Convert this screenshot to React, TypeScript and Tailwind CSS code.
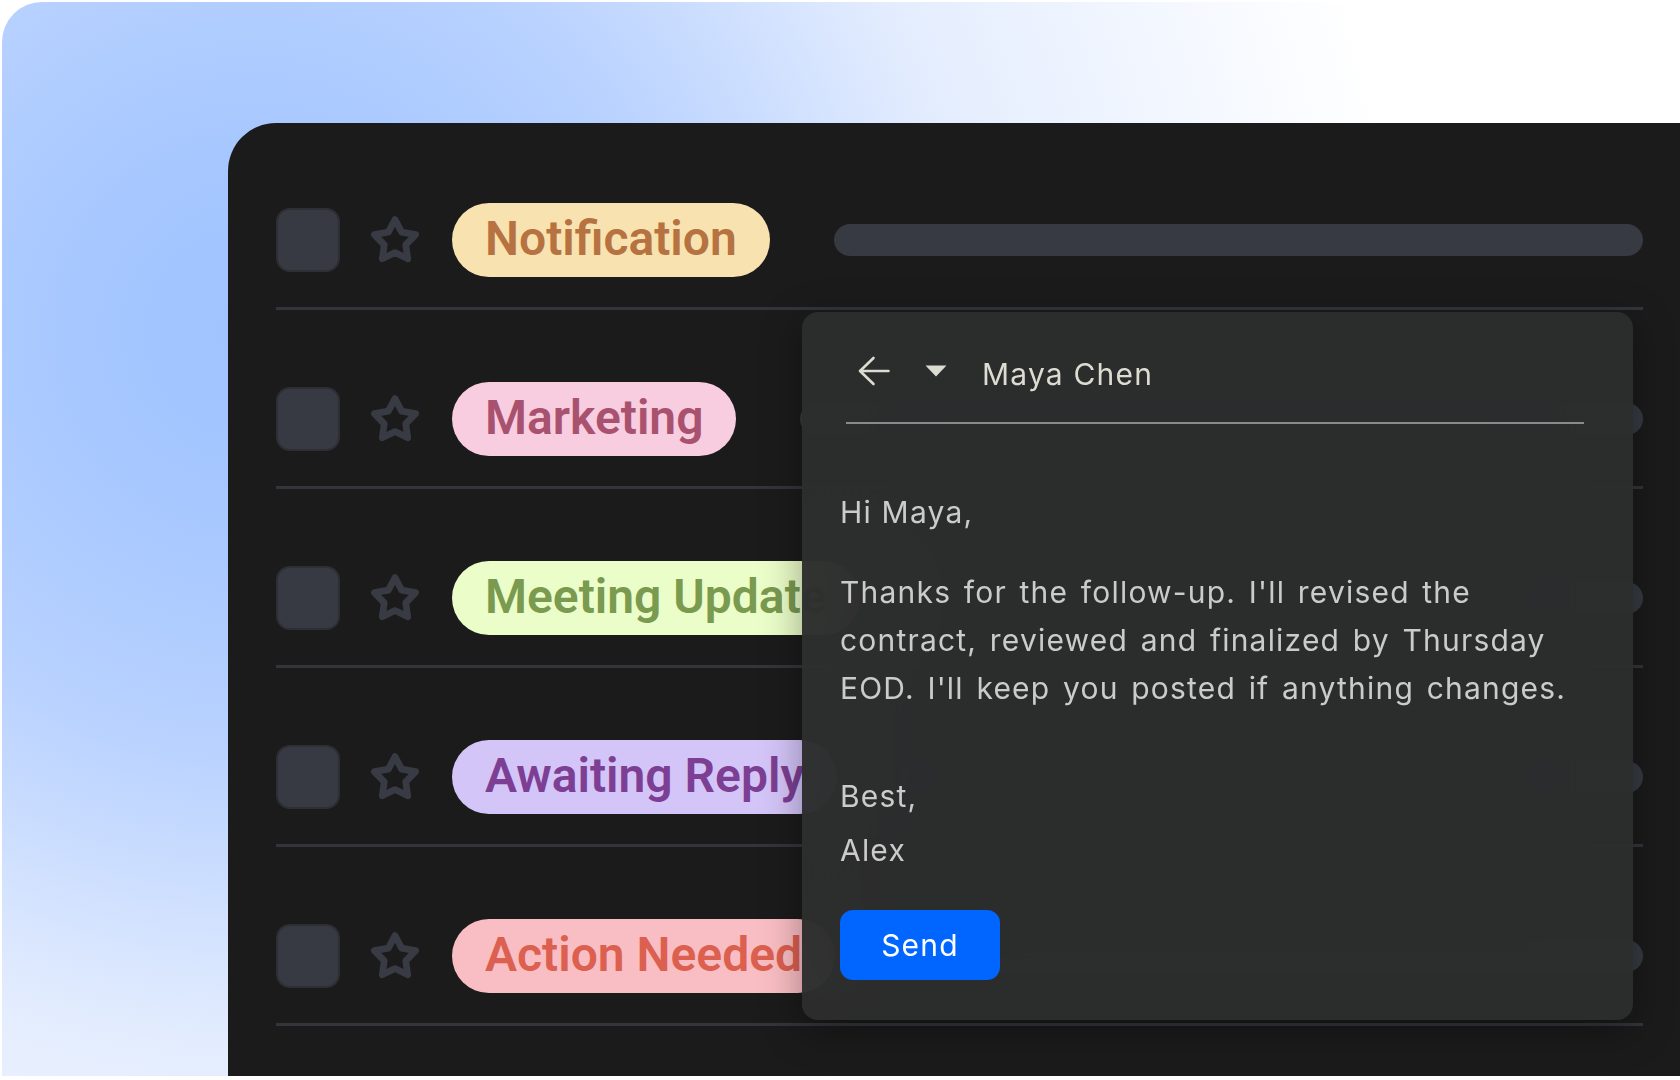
import React from "react";

function Star() {
  return (
    <svg width="52" height="52" viewBox="0 0 24 24" fill="none" className="shrink-0">
      <polygon
        points="12,2.6 15.06,8.39 21.51,9.51 16.95,14.21 17.88,20.69 12,17.8 6.12,20.69 7.05,14.21 2.49,9.51 8.94,8.39"
        stroke="#383b43"
        strokeWidth="3.1"
        strokeLinejoin="round"
      />
    </svg>
  );
}

type RowData = { label: string; bg: string; fg: string };

const rows: RowData[] = [
  { label: "Notification", bg: "bg-[#f7e2b0]", fg: "text-[#b67240]" },
  { label: "Marketing", bg: "bg-[#f9cde0]", fg: "text-[#a9526f]" },
  { label: "Meeting Update", bg: "bg-[#ebfdc9]", fg: "text-[#7a9a4f]" },
  { label: "Awaiting Reply", bg: "bg-[#d4c5f8]", fg: "text-[#7d3f93]" },
  { label: "Action Needed", bg: "bg-[#f9bec3]", fg: "text-[#dc604f]" },
];

function Row({ r }: { r: RowData }) {
  return (
    <div className="flex items-center pb-[30px] border-b-[3px] border-[#33353b]">
      <div className="w-[64px] h-[64px] shrink-0 rounded-[14px] bg-[#373a42] border-2 border-[#2e2f34]" />
      <div className="ml-[29px] mr-[31px] flex items-center">
        <Star />
      </div>
      <div
        className={`h-[74px] shrink-0 rounded-full px-[33px] pb-[3px] flex items-center ${r.bg} ${r.fg} font-['Roboto',sans-serif] text-[48px] font-semibold leading-none whitespace-nowrap`}
      >
        {r.label}
      </div>
      <div className="ml-[64px] flex-1 h-[32px] rounded-full bg-[#373a42]" />
    </div>
  );
}

function Popup() {
  return (
    <div className="absolute left-[574px] top-[189px] w-[831px] rounded-[16px] bg-[#2c2d2d]/95 backdrop-blur-3xl shadow-[0_10px_40px_rgba(0,0,0,0.35)] pt-[36px] pl-[38px] pr-[30px] pb-[40px] font-['Inter',sans-serif] tracking-[1.2px]">
      <div className="h-[46px] flex items-center pl-[18px] pr-[16px] text-[#dcdcd2]">
        <svg width="32" height="30" viewBox="0 0 32 30" fill="none" className="shrink-0">
          <path d="M15.5 2 L2 15 L15.5 28 M2 15 H30.5" stroke="#dcdcd2" strokeWidth="2.6" strokeLinecap="round" strokeLinejoin="round" />
        </svg>
        <svg width="22" height="12" viewBox="0 0 22 12" className="ml-[35px] shrink-0">
          <polygon points="0.5,0.5 21.5,0.5 11,11.5" fill="#dcdcd2" />
        </svg>
        <span className="ml-[35px] pt-[6px] text-[30px] leading-none">Maya Chen</span>
      </div>
      <div className="mt-[28px] ml-[6px] mr-[19px] h-[2px] bg-[#8a8a8a]" />
      <div className="mt-[64px] text-[30px] leading-[48px] text-[#cbcbcb] whitespace-nowrap">
        <p>Hi Maya,</p>
        <p className="mt-[32px] [word-spacing:3px]">
          Thanks for the follow-up. I'll revised the
          <br />
          contract, reviewed and finalized by Thursday
          <br />
          EOD. I'll keep you posted if anything changes.
        </p>
        <p className="mt-[57px] leading-[54px]">Best,</p>
        <p className="leading-[54px]">Alex</p>
      </div>
      <button className="mt-[33px] w-[160px] h-[70px] rounded-[13px] bg-[#0066ff] text-white text-[30px] leading-none flex items-center justify-center">
        Send
      </button>
    </div>
  );
}

export default function App() {
  return (
    <div className="w-[1680px] h-[1080px] bg-white overflow-hidden">
      <div className="ml-[2px] mt-[2px] w-[1678px] h-[1074px] rounded-tl-[40px] bg-[radial-gradient(circle_at_250px_330px,#a0c3ff_0px,#a6c7ff_180px,#b9d2ff_420px,#e4edfe_720px,#ffffff_1150px)] pl-[226px] pt-[121px]">
        <div className="relative h-[953px] rounded-tl-[48px] bg-[#1b1b1b] pl-[48px] pr-[37px] pt-[80px]">
          <div className="flex flex-col gap-[72px]">
            {rows.map((r) => (
              <Row key={r.label} r={r} />
            ))}
          </div>
          <Popup />
        </div>
      </div>
    </div>
  );
}
